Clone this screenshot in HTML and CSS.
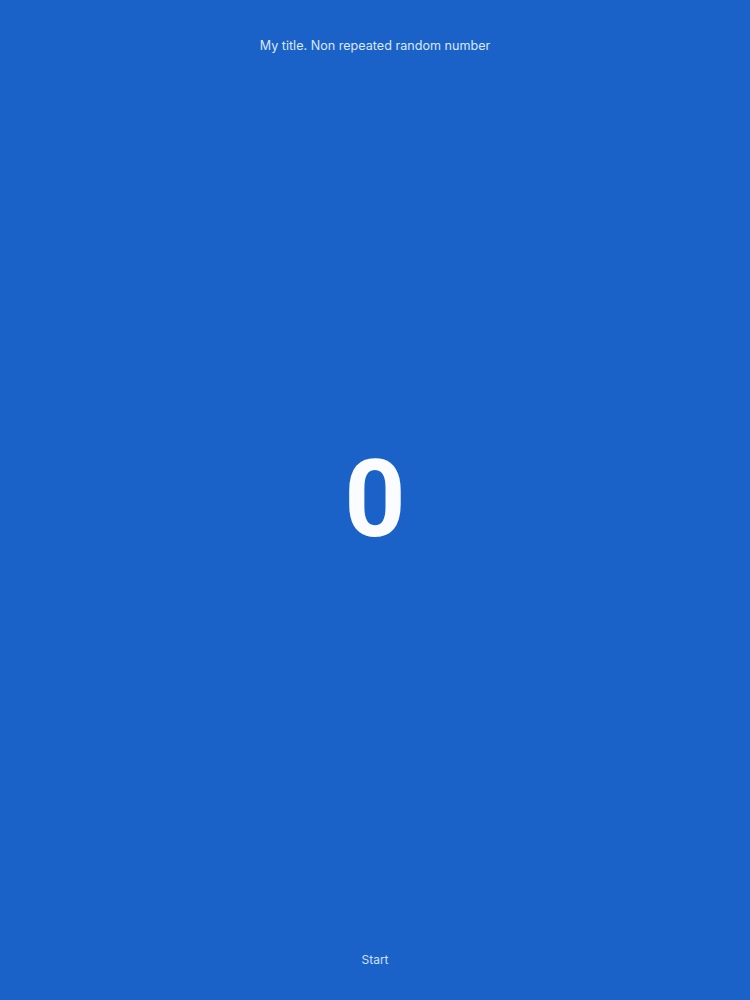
FILE: index.html
```html
<!DOCTYPE html>
<html>
<head>
<meta charset="utf-8">
<link rel="stylesheet" href="styles.css">
</head>
<body>
<div class="screen">
  <div class="title">My title. Non repeated random number</div>
  <div class="number">0</div>
  <div class="start">Start</div>
</div>
</body>
</html>
```
FILE: styles.css
```css
html, body {
  margin: 0;
  padding: 0;
  background: #1a62c8;
}
.screen {
  height: 1000px;
  display: flex;
  flex-direction: column;
  align-items: center;
  font-family: Inter, "Noto Sans", sans-serif;
  color: #ffffff;
}
.title {
  margin-top: 38px;
  font-size: 12.6px;
  line-height: 16px;
  color: #dce7f7;
}
.number {
  margin-top: 386px;
  font-family: Roboto, sans-serif;
  font-size: 107px;
  font-weight: 700;
  line-height: 120px;
  color: #fafcff;
}
.start {
  margin-top: auto;
  margin-bottom: 33px;
  font-size: 12px;
  line-height: 14px;
  color: #cfe0f7;
}
```
